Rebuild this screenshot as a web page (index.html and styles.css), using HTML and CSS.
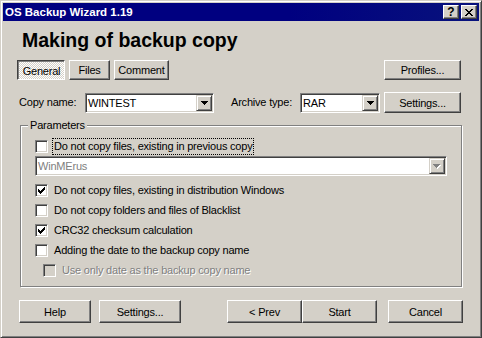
FILE: index.html
```html
<!DOCTYPE html>
<html lang="en">
<head>
  <meta charset="UTF-8">
  <meta name="viewport" content="width=device-width, initial-scale=1.0">
  <title>OS Backup Wizard 1.19</title>
  <link rel="stylesheet" href="styles.css">
</head>
<body>
  <div class="window">
    <div class="titlebar">
      <span class="title">OS Backup Wizard 1.19</span>
      <div class="title-buttons">
        <span class="tbtn help-glyph">?</span>
        <span class="tbtn">
          <!-- classic close cross -->
          <svg width="8" height="7" viewBox="0 0 8 7" shape-rendering="crispEdges">
            <path d="M0 0h2v1h-2z M6 0h2v1h-2z M1 1h2v1h-2z M5 1h2v1h-2z M2 2h4v1h-4z M3 3h2v1h-2z M2 4h4v1h-4z M1 5h2v1h-2z M5 5h2v1h-2z M0 6h2v1h-2z M6 6h2v1h-2z" fill="#000"/>
          </svg>
        </span>
      </div>
    </div>

    <div class="content">
      <h1>Making of backup copy</h1>

      <div class="tabs-row">
        <div class="tabs">
          <button class="btn pressed tab-general">General</button>
          <button class="btn tab-files">Files</button>
          <button class="btn tab-comment">Comment</button>
        </div>
        <button class="btn btn-profiles">Profiles...</button>
      </div>

      <div class="fields-row">
        <span class="field-label label-name">Copy name:</span>
        <div class="combo combo-name">
          <span class="combo-text">WINTEST</span>
          <span class="combo-arrow">
            <svg width="7" height="4" viewBox="0 0 7 4" shape-rendering="crispEdges"><path d="M0 0h7v1h-7z M1 1h5v1h-5z M2 2h3v1h-3z M3 3h1v1h-1z" fill="#000"/></svg>
          </span>
        </div>
        <span class="field-label label-type">Archive type:</span>
        <div class="combo combo-type">
          <span class="combo-text">RAR</span>
          <span class="combo-arrow">
            <svg width="7" height="4" viewBox="0 0 7 4" shape-rendering="crispEdges"><path d="M0 0h7v1h-7z M1 1h5v1h-5z M2 2h3v1h-3z M3 3h1v1h-1z" fill="#000"/></svg>
          </span>
        </div>
        <button class="btn btn-settings">Settings...</button>
      </div>

      <div class="group">
        <span class="group-title">Parameters</span>
        <div class="checks">
          <div class="check-row">
            <span class="checkbox"></span>
            <span class="check-label focus">Do not copy files, existing in previous copy</span>
          </div>
          <div class="combo combo-wide disabled">
            <span class="combo-text">WinMErus</span>
            <span class="combo-arrow">
              <svg width="8" height="5" viewBox="0 0 8 5" shape-rendering="crispEdges">
                <path d="M1 1h7v1h-7z M2 2h5v1h-5z M3 3h3v1h-3z M4 4h1v1h-1z" fill="#fff"/>
                <path d="M0 0h7v1h-7z M1 1h5v1h-5z M2 2h3v1h-3z M3 3h1v1h-1z" fill="#808080"/>
              </svg>
            </span>
          </div>
          <div class="check-row">
            <span class="checkbox">
              <svg width="7" height="7" viewBox="0 0 7 7" shape-rendering="crispEdges"><path d="M6 0h1v1h-1z M5 1h2v1h-2z M0 2h1v1h-1z M4 2h3v1h-3z M0 3h2v1h-2z M3 3h3v1h-3z M0 4h5v1h-5z M1 5h3v1h-3z M2 6h1v1h-1z" fill="#000"/></svg>
            </span>
            <span class="check-label">Do not copy files, existing in distribution Windows</span>
          </div>
          <div class="check-row">
            <span class="checkbox"></span>
            <span class="check-label">Do not copy folders and files of Blacklist</span>
          </div>
          <div class="check-row">
            <span class="checkbox">
              <svg width="7" height="7" viewBox="0 0 7 7" shape-rendering="crispEdges"><path d="M6 0h1v1h-1z M5 1h2v1h-2z M0 2h1v1h-1z M4 2h3v1h-3z M0 3h2v1h-2z M3 3h3v1h-3z M0 4h5v1h-5z M1 5h3v1h-3z M2 6h1v1h-1z" fill="#000"/></svg>
            </span>
            <span class="check-label">CRC32 checksum calculation</span>
          </div>
          <div class="check-row">
            <span class="checkbox"></span>
            <span class="check-label">Adding the date to the backup copy name</span>
          </div>
          <div class="check-row indent">
            <span class="checkbox disabled"></span>
            <span class="check-label disabled">Use only date as the backup copy name</span>
          </div>
        </div>
      </div>

      <div class="buttons-row">
        <button class="btn btn-help">Help</button>
        <button class="btn btn-options">Settings...</button>
        <button class="btn btn-prev">&lt; Prev</button>
        <button class="btn btn-start">Start</button>
        <button class="btn btn-cancel">Cancel</button>
      </div>
    </div>
  </div>
</body>
</html>
```

FILE: styles.css
```css
body {
  margin: 0;
  font-family: "Liberation Sans", Arial, sans-serif;
  font-size: 11px;
  letter-spacing: -0.2px;
  color: #000;
  background-color: #d4d0c8;
}

/* outer window frame */
.window {
  width: 482px;
  height: 338px;
  box-sizing: border-box;
  border: 1px solid;
  border-color: #d4d0c8 #404040 #404040 #d4d0c8;
  box-shadow: inset 1px 1px 0 #fff, inset -1px -1px 0 #808080;
  padding: 2px;
  background-color: #d4d0c8;
}

.titlebar {
  height: 18px;
  display: flex;
  align-items: center;
  background: linear-gradient(to right, #000080 60%, #08127c);
  color: #fff;
}

.title {
  padding-left: 2px;
  font-weight: bold;
  font-size: 11.5px;
  letter-spacing: 0;
}

.title-buttons {
  margin-left: auto;
  margin-right: 2px;
  display: flex;
  gap: 2px;
}

.tbtn {
  width: 16px;
  height: 14px;
  box-sizing: border-box;
  border: 1px solid;
  border-color: #fff #404040 #404040 #fff;
  box-shadow: inset -1px -1px 0 #808080;
  background-color: #d4d0c8;
  display: flex;
  align-items: center;
  justify-content: center;
  color: #000;
}

.help-glyph {
  font-weight: bold;
  font-size: 12px;
  line-height: 12px;
  letter-spacing: 0;
}

.content {
  padding: 0 16px;
}

h1 {
  margin: 7px 0 0 3px;
  font-size: 19.5px;
  line-height: 24px;
  font-weight: bold;
  letter-spacing: 0;
}

/* push buttons */
.btn {
  box-sizing: border-box;
  height: 20px;
  padding: 0;
  font: inherit;
  letter-spacing: inherit;
  color: #000;
  background-color: #d4d0c8;
  border: 1px solid;
  border-color: #fff #404040 #404040 #fff;
  box-shadow: inset -1px -1px 0 #808080;
  border-radius: 0;
}

.btn.pressed {
  border-color: #404040 #fff #fff #404040;
  box-shadow: inset 1px 1px 0 #808080;
  background: repeating-conic-gradient(#fff 0 25%, #d4d0c8 0 50%) 0 0 / 2px 2px;
  padding: 1px 0 0 1px;
}

.tabs-row {
  display: flex;
  margin-top: 8px;
}

.tabs {
  display: flex;
  gap: 4px;
  margin-left: -2px;
}

.tab-general { width: 48px; }
.tab-files { width: 41px; }
.tab-comment { width: 55px; }

.btn-profiles {
  margin-left: auto;
  margin-right: 2px;
  width: 77px;
}

.fields-row {
  display: flex;
  align-items: center;
  margin-top: 12px;
  height: 21px;
}

.field-label {
  line-height: 13px;
}

.label-name { width: 66px; }
.label-type { width: 69px; margin-left: 17px; }

.combo {
  display: flex;
  box-sizing: border-box;
  height: 20px;
  padding: 1px;
  border: 1px solid;
  border-color: #808080 #fff #fff #808080;
  box-shadow: inset 1px 1px 0 #404040, inset -1px -1px 0 #d4d0c8;
  background-color: #fff;
}

.combo-name { width: 129px; margin-top: 1px; }
.combo-type { width: 80px; margin-top: 1px; }

.combo-text {
  flex: 1;
  padding-left: 1px;
  line-height: 16px;
}

.combo-arrow {
  width: 16px;
  height: 16px;
  box-sizing: border-box;
  border: 1px solid;
  border-color: #d4d0c8 #404040 #404040 #d4d0c8;
  box-shadow: inset 1px 1px 0 #fff, inset -1px -1px 0 #808080;
  background-color: #d4d0c8;
  display: flex;
  align-items: center;
  justify-content: center;
}

.btn-settings {
  margin-left: auto;
  margin-right: 2px;
  width: 77px;
  height: 21px;
}

/* group box */
.group {
  margin: 12px 1px 0;
  display: flex;
  flex-direction: column;
  padding: 0 14px 6px;
  border: 1px solid #808080;
  box-shadow: 1px 1px 0 #fff, inset 1px 1px 0 #fff;
}

.group-title {
  align-self: flex-start;
  margin: -7px 0 0 -7px;
  padding: 0 2px;
  line-height: 13px;
  background-color: #d4d0c8;
}

.checks {
  margin-top: 4px;
}

.check-row {
  display: flex;
  align-items: center;
  height: 20px;
}

.check-row.indent {
  padding-left: 8px;
}

.checkbox {
  width: 13px;
  height: 13px;
  flex-shrink: 0;
  box-sizing: border-box;
  border: 1px solid;
  border-color: #808080 #fff #fff #808080;
  box-shadow: inset 1px 1px 0 #404040, inset -1px -1px 0 #d4d0c8;
  background-color: #fff;
  display: flex;
  align-items: center;
  justify-content: center;
}

.checkbox.disabled {
  background-color: #d4d0c8;
}

.check-label {
  margin-left: 4px;
  padding: 0 1px;
  line-height: 15px;
  border: 1px dotted transparent;
}

.check-label.focus {
  border-color: #000;
}

.check-label.disabled {
  color: #808080;
  text-shadow: 1px 1px 0 #fff;
}

.combo-wide {
  margin-bottom: 4px;
}

.combo.disabled .combo-text {
  color: #808080;
}

/* bottom buttons */
.buttons-row {
  display: flex;
  margin-top: 13px;
}

.buttons-row .btn {
  height: 23px;
  width: 75px;
}

.buttons-row .btn-help { width: 72px; }
.buttons-row .btn-options { width: 82px; margin-left: 8px; }
.btn-prev { margin-left: auto; }
.btn-cancel { margin-left: 11px; }
```
